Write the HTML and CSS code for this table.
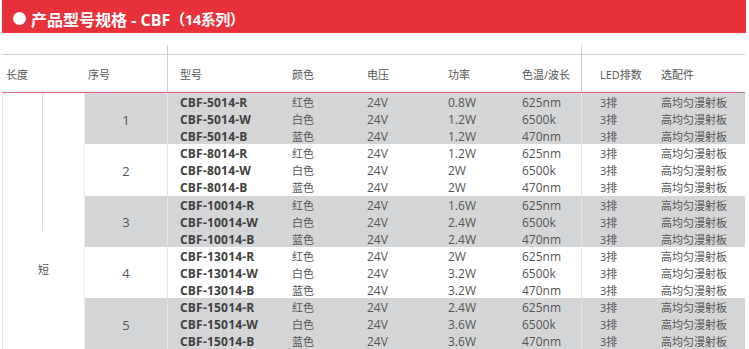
FILE: index.html
```html
<!DOCTYPE html>
<html lang="zh">
<head>
  <meta charset="UTF-8">
  <title>产品型号规格 - CBF（14系列）</title>
  <link rel="stylesheet" href="styles.css">
</head>
<body>
  <div class="banner"><span class="dot"></span>产品型号规格 - CBF<span class="par">（14系列）</span></div>

  <div class="tabla">
    <div class="cab-top">
      <div></div><div></div><div class="sep"></div><div></div><div></div><div></div><div></div><div class="sep"></div><div></div>
    </div>
    <div class="cab">
      <div class="c-len">长度</div>
      <div class="c-num">序号</div>
      <div class="sep c-mod">型号</div>
      <div>颜色</div>
      <div>电压</div>
      <div>功率</div>
      <div>色温/波长</div>
      <div class="sep c-led">LED排数</div>
      <div>选配件</div>
    </div>

    <div class="cuerpo">
      <div class="len"><span>短</span></div>
      <div class="grupos">

        <div class="grupo gris">
          <div class="num">1</div>
          <div class="filas">
            <div class="fila"><b>CBF-5014-R</b><span class="zh">红色</span><span>24V</span><span>0.8W</span><span>625nm</span><span class="sep zh">3排</span><span class="zh">高均匀漫射板</span></div>
            <div class="fila"><b>CBF-5014-W</b><span class="zh">白色</span><span>24V</span><span>1.2W</span><span>6500k</span><span class="sep zh">3排</span><span class="zh">高均匀漫射板</span></div>
            <div class="fila"><b>CBF-5014-B</b><span class="zh">蓝色</span><span>24V</span><span>1.2W</span><span>470nm</span><span class="sep zh">3排</span><span class="zh">高均匀漫射板</span></div>
          </div>
        </div>

        <div class="grupo">
          <div class="num">2</div>
          <div class="filas">
            <div class="fila"><b>CBF-8014-R</b><span class="zh">红色</span><span>24V</span><span>1.2W</span><span>625nm</span><span class="sep zh">3排</span><span class="zh">高均匀漫射板</span></div>
            <div class="fila"><b>CBF-8014-W</b><span class="zh">白色</span><span>24V</span><span>2W</span><span>6500k</span><span class="sep zh">3排</span><span class="zh">高均匀漫射板</span></div>
            <div class="fila"><b>CBF-8014-B</b><span class="zh">蓝色</span><span>24V</span><span>2W</span><span>470nm</span><span class="sep zh">3排</span><span class="zh">高均匀漫射板</span></div>
          </div>
        </div>

        <div class="grupo gris">
          <div class="num">3</div>
          <div class="filas">
            <div class="fila"><b>CBF-10014-R</b><span class="zh">红色</span><span>24V</span><span>1.6W</span><span>625nm</span><span class="sep zh">3排</span><span class="zh">高均匀漫射板</span></div>
            <div class="fila"><b>CBF-10014-W</b><span class="zh">白色</span><span>24V</span><span>2.4W</span><span>6500k</span><span class="sep zh">3排</span><span class="zh">高均匀漫射板</span></div>
            <div class="fila"><b>CBF-10014-B</b><span class="zh">蓝色</span><span>24V</span><span>2.4W</span><span>470nm</span><span class="sep zh">3排</span><span class="zh">高均匀漫射板</span></div>
          </div>
        </div>

        <div class="grupo">
          <div class="num">4</div>
          <div class="filas">
            <div class="fila"><b>CBF-13014-R</b><span class="zh">红色</span><span>24V</span><span>2W</span><span>625nm</span><span class="sep zh">3排</span><span class="zh">高均匀漫射板</span></div>
            <div class="fila"><b>CBF-13014-W</b><span class="zh">白色</span><span>24V</span><span>3.2W</span><span>6500k</span><span class="sep zh">3排</span><span class="zh">高均匀漫射板</span></div>
            <div class="fila"><b>CBF-13014-B</b><span class="zh">蓝色</span><span>24V</span><span>3.2W</span><span>470nm</span><span class="sep zh">3排</span><span class="zh">高均匀漫射板</span></div>
          </div>
        </div>

        <div class="grupo gris">
          <div class="num">5</div>
          <div class="filas">
            <div class="fila"><b>CBF-15014-R</b><span class="zh">红色</span><span>24V</span><span>2.4W</span><span>625nm</span><span class="sep zh">3排</span><span class="zh">高均匀漫射板</span></div>
            <div class="fila"><b>CBF-15014-W</b><span class="zh">白色</span><span>24V</span><span>3.6W</span><span>6500k</span><span class="sep zh">3排</span><span class="zh">高均匀漫射板</span></div>
            <div class="fila"><b>CBF-15014-B</b><span class="zh">蓝色</span><span>24V</span><span>3.6W</span><span>470nm</span><span class="sep zh">3排</span><span class="zh">高均匀漫射板</span></div>
          </div>
        </div>

      </div>
    </div>
  </div>
</body>
</html>
```

FILE: styles.css
```css
body {
  margin: 0;
  background: #fff;
  font-family: "Open Sans", "Noto Sans CJK SC", sans-serif;
  color: #555;
  overflow: hidden;
}
.banner {
  margin-left: 2px;
  width: 744px;
  height: 33px;
  background: #e8313b;
  color: #fff;
  font-weight: bold;
  font-size: 16px;
  display: flex;
  align-items: center;
  padding-top: 4px;
  box-sizing: border-box;
  white-space: pre;
}
.par {
  font-size: 15px;
  letter-spacing: -0.5px;
}
.dot {
  width: 13px;
  height: 13px;
  border-radius: 50%;
  background: #fff;
  margin-left: 11px;
  margin-right: 5px;
}
.tabla {
  margin: 12px 0 0 2px;
  width: 743px;
}
.cab-top,
.cab {
  display: grid;
  grid-template-columns: 83px 82px 125px 75px 81px 74px 59px 80px 1fr;
}
.cab-top {
  height: 9px;
}
.cab {
  height: 37px;
  border-top: 1px solid #cfcfcf;
  border-bottom: 1px solid #d96a78;
  font-size: 11px;
  color: #555;
}
.cab > div {
  height: 100%;
  display: flex;
  align-items: center;
  box-sizing: border-box;
}
.cab-top .sep,
.cab .sep {
  border-left: 1px solid #cfcfcf;
}
.c-len { padding-left: 4px; }
.c-num { padding-left: 3px; }
.c-mod { padding-left: 12px; }
.c-led { padding-left: 18px; }

.cuerpo {
  display: flex;
}
.len {
  width: 83px;
  flex: none;
  box-sizing: border-box;
  border-left: 1px solid #e2e2e2;
  border-right: 1px solid #ececec;
  position: relative;
  text-align: center;
  font-size: 11px;
  color: #555;
  padding-top: 168px;
}
.len::before {
  content: "";
  position: absolute;
  left: 39px;
  top: 0;
  width: 1px;
  height: 138px;
  background: #dcdcdc;
}
.grupos {
  flex: 1;
}
.grupo {
  display: flex;
}
.gris {
  background: #d4d5d7;
}
.num {
  width: 82px;
  flex: none;
  display: flex;
  align-items: center;
  justify-content: center;
  font-size: 13px;
  color: #555;
  padding-top: 2px;
  box-sizing: border-box;
}
.filas {
  flex: 1;
}
.fila {
  display: grid;
  grid-template-columns: 125px 75px 81px 74px 59px 80px 1fr;
  height: 17.1px;
  font-size: 12px;
  line-height: 15px;
  padding-top: 2px;
  box-sizing: border-box;
  white-space: nowrap;
}
.fila .zh {
  font-size: 11px;
}
.fila b {
  border-left: 1px solid #e3e3e3;
  padding-left: 12px;
  color: #404040;
  letter-spacing: 0.2px;
  margin-top: -2px;
  padding-top: 2px;
}
.fila .sep {
  border-left: 1px solid #e3e3e3;
  padding-left: 18px;
  margin-top: -2px;
  padding-top: 2px;
}
```
